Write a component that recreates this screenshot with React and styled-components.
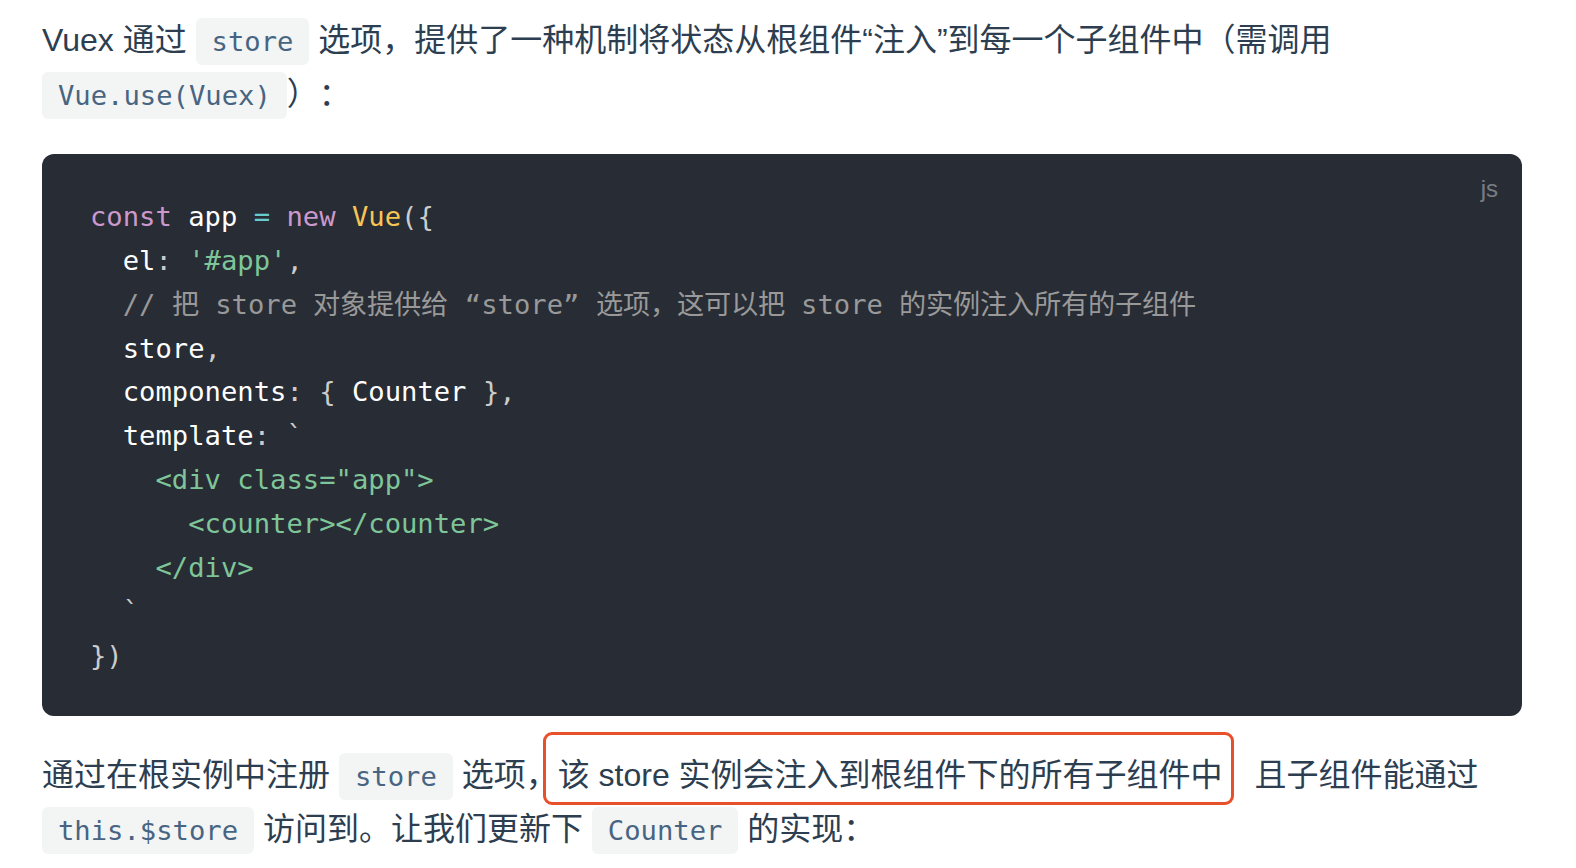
import React from "react";
import styled, { createGlobalStyle, css } from "styled-components";

const GlobalStyle = createGlobalStyle`
  html, body { margin: 0; padding: 0; background: #ffffff; }
  body { -webkit-font-smoothing: antialiased; text-spacing-trim: space-all; }
`;

const Page = styled.main`
  box-sizing: border-box;
  width: 1576px;
  padding: 13px 54px 0 42px;
  font-family: "Liberation Sans", "Noto Sans CJK SC", sans-serif;
  font-size: 32px;
  line-height: 1.7;
  color: #2c3e50;
  text-spacing-trim: space-all;
`;

const Paragraph = styled.p`
  margin: 0 0 32px;
`;

const InlineCode = styled.code`
  font-family: "DejaVu Sans Mono", "Noto Sans CJK SC", monospace;
  font-size: 0.85em;
  padding: 8px 16px;
  margin: 0;
  color: #476582;
  background: rgba(27, 31, 35, 0.05);
  border-radius: 6px;
`;

const Marked = styled.span`
  position: relative;
  margin-right: 1em;
  &::after {
    content: "";
    position: absolute;
    top: -25px;
    bottom: -12px;
    left: -15px;
    right: -11px;
    border: 3px solid #e8502a;
    border-radius: 9px;
    pointer-events: none;
  }
`;

const CodeBlock = styled.div`
  position: relative;
  margin: 0 0 32px;
  background: #282c34;
  border-radius: 12px;
`;

const LangLabel = styled.span`
  position: absolute;
  top: 18px;
  right: 24px;
  font-family: "Liberation Sans", sans-serif;
  font-size: 24px;
  line-height: 1.4;
  color: rgba(255, 255, 255, 0.4);
`;

const Pre = styled.pre`
  margin: 0;
  padding: 41px 48px 38px;
  font-family: "DejaVu Sans Mono", "Noto Sans CJK SC", monospace;
  font-size: 27.2px;
  line-height: 43.9px;
  color: #ffffff;
  white-space: pre;
  overflow: hidden;
  text-spacing-trim: space-all;
`;

const tokenColors = {
  keyword: "#cc99cd",
  operator: "#67cdcc",
  className: "#f8c555",
  punct: "#cccccc",
  string: "#7ec699",
  comment: "#999999",
  plain: "#ffffff",
};

const Tok = styled.span`
  ${({ $k }) => css`
    color: ${tokenColors[$k] || "#ffffff"};
  `}
`;

const lines = [
  [["keyword", "const"], ["plain", " app "], ["operator", "="], ["plain", " "], ["keyword", "new"], ["plain", " "], ["className", "Vue"], ["punct", "({"]],
  [["plain", "  el"], ["punct", ":"], ["plain", " "], ["string", "'#app'"], ["punct", ","]],
  [["plain", "  "], ["comment", "// 把 store 对象提供给 “store” 选项，这可以把 store 的实例注入所有的子组件"]],
  [["plain", "  store"], ["punct", ","]],
  [["plain", "  components"], ["punct", ":"], ["plain", " "], ["punct", "{"], ["plain", " Counter "], ["punct", "}"], ["punct", ","]],
  [["plain", "  template"], ["punct", ":"], ["plain", " "], ["punct", "`"]],
  [["string", '    <div class="app">']],
  [["string", "      <counter></counter>"]],
  [["string", "    </div>"]],
  [["punct", "  `"]],
  [["punct", "})"]],
];

export default function App() {
  return (
    <>
      <GlobalStyle />
      <Page lang="zh-CN">
        <Paragraph>
          Vuex 通过 <InlineCode>store</InlineCode> 选项，提供了一种机制将状态从根组件“注入”到每一个子组件中（需调用 <InlineCode>Vue.use(Vuex)</InlineCode>）：
        </Paragraph>
        <CodeBlock>
          <LangLabel>js</LangLabel>
          <Pre>
            <code>
              {lines.map((line, i) => (
                <React.Fragment key={i}>
                  {line.map(([k, t], j) => (
                    <Tok key={j} $k={k}>
                      {t}
                    </Tok>
                  ))}
                  {i < lines.length - 1 ? "\n" : null}
                </React.Fragment>
              ))}
            </code>
          </Pre>
        </CodeBlock>
        <Paragraph>
          通过在根实例中注册 <InlineCode>store</InlineCode> 选项，<Marked>该 store 实例会注入到根组件下的所有子组件中</Marked>且子组件能通过 <InlineCode>this.$store</InlineCode> 访问到。让我们更新下 <InlineCode>Counter</InlineCode> 的实现：
        </Paragraph>
      </Page>
    </>
  );
}
